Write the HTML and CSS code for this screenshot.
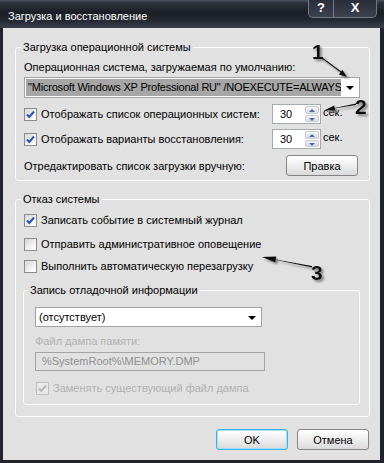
FILE: index.html
```html
<!DOCTYPE html>
<html>
<head>
    <title>Загрузка и восстановление</title>
    <link rel="stylesheet" href="styles.css">
</head>
<body>
    <div class="window">
        <!-- Title bar -->
        <div class="titlebar">
            <span class="title">Загрузка и восстановление</span>
            <div class="caption-buttons">
                <span class="cap-btn help">?</span>
                <span class="cap-btn close">X</span>
            </div>
        </div>

        <div class="client">
            <!-- Startup group -->
            <fieldset class="group startup">
                <legend>Загрузка операционной системы</legend>
                <div class="line label-top">Операционная система, загружаемая по умолчанию:</div>
                <div class="combo wide">
                    <span class="combo-text selected">"Microsoft Windows XP Professional RU" /NOEXECUTE=ALWAYSOFF</span>
                    <span class="combo-arrow"></span>
                </div>
                <div class="spin-row first">
                    <label class="check checked"><span class="box"><svg width="11" height="11" viewBox="0 0 11 11"><path d="M2 5.5 L4.3 8 L9 2.5" fill="none" stroke="#2b52b5" stroke-width="2"/></svg></span>Отображать список операционных систем:</label>
                    <div class="spin"><span class="spin-val">30</span><span class="spin-btns"><span class="up"></span><span class="down"></span></span></div>
                    <span class="unit">сек.</span>
                </div>
                <div class="spin-row">
                    <label class="check checked"><span class="box"><svg width="11" height="11" viewBox="0 0 11 11"><path d="M2 5.5 L4.3 8 L9 2.5" fill="none" stroke="#2b52b5" stroke-width="2"/></svg></span>Отображать варианты восстановления:</label>
                    <div class="spin"><span class="spin-val">30</span><span class="spin-btns"><span class="up"></span><span class="down"></span></span></div>
                    <span class="unit">сек.</span>
                </div>
                <div class="edit-row">
                    <span>Отредактировать список загрузки вручную:</span>
                    <button class="btn edit-btn">Правка</button>
                </div>
            </fieldset>

            <!-- System failure group -->
            <fieldset class="group failure">
                <legend>Отказ системы</legend>
                <label class="check checked row1"><span class="box"><svg width="11" height="11" viewBox="0 0 11 11"><path d="M2 5.5 L4.3 8 L9 2.5" fill="none" stroke="#2b52b5" stroke-width="2"/></svg></span>Записать событие в системный журнал</label>
                <label class="check row2"><span class="box"></span>Отправить административное оповещение</label>
                <label class="check row3"><span class="box"></span>Выполнить автоматическую перезагрузку</label>

                <fieldset class="group debug">
                    <legend>Запись отладочной информации</legend>
                    <div class="combo small">
                        <span class="combo-text">(отсутствует)</span>
                        <span class="combo-arrow"></span>
                    </div>
                    <div class="line disabled dump-label">Файл дампа памяти:</div>
                    <div class="textbox">%SystemRoot%\MEMORY.DMP</div>
                    <label class="check disabled overwrite"><span class="box"><svg width="11" height="11" viewBox="0 0 11 11"><path d="M2 5.5 L4.3 8 L9 2.5" fill="none" stroke="#b9b9b9" stroke-width="2"/></svg></span>Заменять существующий файл дампа</label>
                </fieldset>
            </fieldset>

            <!-- Dialog buttons -->
            <div class="dialog-buttons">
                <button class="btn ok">OK</button>
                <button class="btn cancel">Отмена</button>
            </div>
        </div>

        <!-- Hand-drawn annotations on top of the screenshot -->
        <svg class="notes" width="384" height="463" viewBox="0 0 384 463">
            <defs>
                <filter id="shadow" x="-50%" y="-50%" width="200%" height="200%">
                    <feDropShadow dx="2" dy="2" stdDeviation="1.3" flood-color="#777" flood-opacity="0.9"/>
                </filter>
            </defs>
            <g filter="url(#shadow)" fill="#111" stroke="#111">
                <line x1="322" y1="58" x2="341" y2="72" stroke-width="1.2"/>
                <polygon points="347,77 338.8,74.6 342.4,69.8" stroke="none"/>
                <text x="312" y="59" class="note-num">1</text>

                <polygon points="325,110 356,103.5 356,105" stroke="none"/>
                <polygon points="325,110 335.3,110.8 334.3,105.5" stroke="none"/>
                <text x="355" y="114" class="note-num">2</text>

                <polygon points="262,257 312,266 312,267.5" stroke="none"/>
                <polygon points="262,257 276.2,256.6 275.4,262.4" stroke="none"/>
                <text x="311" y="280" class="note-num">3</text>
            </g>
        </svg>
    </div>
</body>
</html>
```

FILE: styles.css
```css
/* Page */
body {
    margin: 0;
    font-family: "Liberation Sans", Arial, sans-serif;
    font-size: 11px;
    color: #000;
    background: #e1e1e1;
}

/* Window frame */
.window {
    position: relative;
    width: 384px;
    height: 463px;
    box-sizing: border-box;
    padding: 0 4px 3px 3px;
    background: #20232c;
    display: flex;
    flex-direction: column;
    overflow: hidden;
}

.titlebar {
    height: 28px;
    flex: none;
    margin: 0 -4px 0 -3px;
    padding-left: 8px;
    display: flex;
    align-items: flex-start;
    background: linear-gradient(#4d5262 0, #2c303b 3px, #1b1e26 13px, #262a34 21px, #3a3f4c 28px);
}

.title {
    color: #fff;
    margin-top: 9px;
    line-height: 14px;
    font-size: 11px;
}

.caption-buttons {
    margin-left: auto;
    margin-right: 7px;
    display: flex;
    height: 17px;
    border: 1px solid #737886;
    border-top: none;
    border-radius: 0 0 5px 5px;
    background: linear-gradient(#2a2e38, #3c414e);
}

.cap-btn {
    color: #fff;
    font-weight: bold;
    font-size: 13px;
    line-height: 16px;
    text-align: center;
}

.help {
    width: 24px;
    border-right: 1px solid #737886;
}

.close {
    width: 42px;
}

/* Client area */
.client {
    flex: 1;
    background: #e1e1e1;
    padding: 12px 10px 0 12px;
}

.group {
    margin: 0;
    padding: 0 9px 4px 8px;
    border: 1px solid #fdfdfd;
    border-radius: 3px;
    min-width: 0;
}

.group legend {
    padding: 0 2px;
    margin-left: -3px;
    line-height: 14px;
}

.line {
    line-height: 14px;
}

.label-top {
    margin-top: 6px;
}

/* Combo boxes */
.combo {
    display: flex;
    align-items: center;
    box-sizing: border-box;
    height: 21px;
    background: #fff;
    border: 1px solid #a3a3a3;
    padding: 1px;
}

.combo.wide {
    margin-top: 3px;
}

.combo.small {
    margin-top: 10px;
    width: 227px;
    height: 20px;
}

.combo-text {
    flex: 1;
    white-space: nowrap;
    overflow: hidden;
    line-height: 17px;
    padding-left: 2px;
}

.combo-text.selected {
    background: #a6a6a6;
    letter-spacing: -0.2px;
}

.combo-arrow {
    width: 17px;
    flex: none;
    height: 17px;
    position: relative;
}

.combo-arrow::after {
    content: "";
    position: absolute;
    left: 5px;
    top: 7px;
    border-left: 4px solid transparent;
    border-right: 4px solid transparent;
    border-top: 4px solid #000;
}

/* Checkboxes */
.check {
    display: flex;
    align-items: center;
    line-height: 14px;
    white-space: nowrap;
}

.check .box {
    width: 11px;
    height: 11px;
    flex: none;
    margin-right: 4px;
    border: 1px solid #8c8c8c;
    background: linear-gradient(135deg, #d6d6d6, #f6f6f6 70%, #fff);
    display: flex;
}

.check.disabled {
    color: #b1b1b1;
}

.check.disabled .box {
    border-color: #c0c0c0;
    background: #e9e9e9;
}

/* Spinner rows */
.spin-row {
    display: flex;
    align-items: center;
    height: 20px;
    margin-top: 5px;
}

.spin-row.first {
    margin-top: 6px;
}

.spin-row .check {
    width: 248px;
}

.spin {
    width: 49px;
    height: 20px;
    box-sizing: border-box;
    border: 1px solid #a5a9b0;
    background: #fff;
    display: flex;
}

.spin-val {
    flex: 1;
    line-height: 18px;
    padding-left: 7px;
}

.spin-btns {
    width: 14px;
    margin: 1px 1px 1px 0;
    display: flex;
    flex-direction: column;
    gap: 1px;
}

.spin-btns span {
    flex: 1;
    background: linear-gradient(#f4f4f4, #d9dce2);
    border: 1px solid #c6cad2;
    border-radius: 2px;
    position: relative;
}

.spin-btns span::after {
    content: "";
    position: absolute;
    left: 3px;
    top: 2px;
    border-left: 3px solid transparent;
    border-right: 3px solid transparent;
}

.spin-btns .up::after {
    border-bottom: 3px solid #5068a8;
}

.spin-btns .down::after {
    border-top: 3px solid #5068a8;
}

.unit {
    margin-left: 2px;
    margin-top: -4px;
}

.edit-row {
    display: flex;
    align-items: center;
    justify-content: space-between;
    margin-top: 6px;
    padding-right: 2px;
}

/* Buttons */
.btn {
    font-family: inherit;
    font-size: 11px;
    height: 21px;
    box-sizing: border-box;
    border: 1px solid #858585;
    border-radius: 3px;
    background: linear-gradient(#ffffff, #eeeeee 50%, #dadada);
    padding: 0;
    color: #000;
}

.edit-btn {
    width: 72px;
}

/* Failure group */
.failure {
    margin-top: 11px;
    padding-bottom: 11px;
}

.failure .row1 {
    margin-top: 7px;
}

.failure .row2 {
    margin-top: 10px;
}

.failure .row3 {
    margin-top: 8px;
}

.debug {
    margin: 10px 0 0 -1px;
    padding: 0 11px 9px 11px;
}

.debug legend {
    margin-left: -7px;
}

.disabled {
    color: #b1b1b1;
}

.dump-label {
    margin-top: 7px;
}

.textbox {
    margin-top: 4px;
    width: 230px;
    height: 19px;
    box-sizing: border-box;
    border: 1px solid #a5a5a5;
    color: #8f8f8f;
    line-height: 17px;
    padding-left: 6px;
}

.overwrite {
    margin-top: 10px;
    margin-left: 1px;
}

/* OK / Cancel */
.dialog-buttons {
    display: flex;
    justify-content: flex-end;
    gap: 9px;
    margin-top: 12px;
    padding-right: 1px;
}

.ok {
    width: 72px;
    border-color: #3fb3e6;
    box-shadow: inset 0 0 0 1px #9be0f8;
}

.cancel {
    width: 72px;
}

/* Annotation layer */
.notes {
    position: absolute;
    left: 0;
    top: 0;
    pointer-events: none;
}

.note-num {
    font-family: "Liberation Sans", Arial, sans-serif;
    font-weight: bold;
    font-size: 21px;
    stroke: none;
}
```
